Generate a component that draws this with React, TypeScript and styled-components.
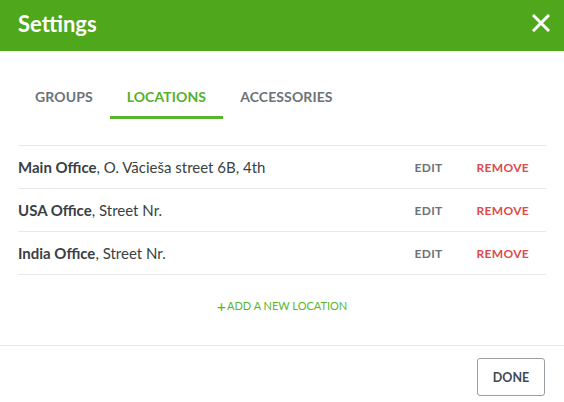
import React from "react";
import styled, { createGlobalStyle } from "styled-components";

const Global = createGlobalStyle`
  html, body { margin: 0; padding: 0; background: #fff; }
  body { font-family: Lato, "Open Sans", sans-serif; }
`;

const Dialog = styled.div`
  width: 564px;
  height: 402px;
  display: flex;
  flex-direction: column;
  background: #fff;
`;

const Header = styled.header`
  height: 51px;
  background: #4fa71b;
  display: flex;
  align-items: center;
  justify-content: space-between;
  padding: 0 11px 0 18px;
  box-sizing: border-box;
`;

const Title = styled.h1`
  margin: 0;
  font-size: 22px;
  font-weight: 700;
  color: #fff;
  line-height: 26px;
  margin-top: -4px;
`;

const CloseButton = styled.button`
  border: 0;
  background: none;
  padding: 0;
  width: 24px;
  height: 24px;
  display: flex;
  align-items: center;
  justify-content: center;
  margin-top: -6px;
  cursor: pointer;
`;

const Body = styled.div`
  flex: 1;
  padding: 0 18px;
  display: flex;
  flex-direction: column;
`;

const Tabs = styled.nav`
  display: flex;
  margin-top: 24px;
  margin-bottom: 26px;
`;

const Tab = styled.div<{ $active?: boolean }>`
  padding: 14px 17px 11px;
  font-size: 14px;
  line-height: 16px;
  font-weight: 700;
  letter-spacing: 0.1px;
  color: ${(p) => (p.$active ? "#55b02a" : "#6b7277")};
  border-bottom: 3px solid ${(p) => (p.$active ? "#5ab52c" : "transparent")};
`;

const List = styled.div`
  border-bottom: 1px solid #e8e8e8;
`;

const Row = styled.div`
  height: 42px;
  border-top: 1px solid #e8e8e8;
  display: flex;
  align-items: center;
`;

const Label = styled.div`
  flex: 1;
  font-size: 15px;
  color: #3a3f44;
`;

const Name = styled.strong`
  font-weight: 700;
`;

const Action = styled.button<{ $danger?: boolean }>`
  border: 0;
  background: none;
  padding: 0 17px;
  font-family: inherit;
  font-size: 12px;
  font-weight: 700;
  letter-spacing: 0.3px;
  color: ${(p) => (p.$danger ? "#e04a4a" : "#6b7277")};
  cursor: pointer;
`;

const AddLink = styled.button`
  align-self: center;
  margin-top: 24px;
  border: 0;
  background: none;
  font-family: inherit;
  font-size: 11px;
  color: #5ab52c;
  display: flex;
  align-items: center;
  gap: 1px;
  padding: 0;
  cursor: pointer;
`;

const Plus = styled.span`
  font-size: 16px;
  line-height: 12px;
`;

const Footer = styled.footer`
  border-top: 1px solid #e8e8e8;
  padding: 12px 19px 6px;
  display: flex;
  justify-content: flex-end;
`;

const DoneButton = styled.button`
  width: 68px;
  height: 38px;
  border: 1px solid #9a9fa3;
  border-radius: 3px;
  background: #fff;
  font-family: inherit;
  font-size: 12.5px;
  font-weight: 700;
  color: #3f4a55;
  cursor: pointer;
`;

const locations = [
  { name: "Main Office", address: "O. Vācieša street 6B, 4th" },
  { name: "USA Office", address: "Street Nr." },
  { name: "India Office", address: "Street Nr." },
];

export default function App() {
  return (
    <>
      <Global />
      <Dialog>
        <Header>
          <Title>Settings</Title>
          <CloseButton aria-label="Close">
            <svg width="18" height="18" viewBox="0 0 18 18">
              <path d="M2 2 L16 16 M16 2 L2 16" stroke="#fff" strokeWidth="3" strokeLinecap="square" />
            </svg>
          </CloseButton>
        </Header>
        <Body>
          <Tabs>
            <Tab>GROUPS</Tab>
            <Tab $active>LOCATIONS</Tab>
            <Tab>ACCESSORIES</Tab>
          </Tabs>
          <List>
            {locations.map((l) => (
              <Row key={l.name}>
                <Label>
                  <Name>{l.name}</Name>, {l.address}
                </Label>
                <Action>EDIT</Action>
                <Action $danger>REMOVE</Action>
              </Row>
            ))}
          </List>
          <AddLink>
            <Plus>+</Plus>ADD A NEW LOCATION
          </AddLink>
        </Body>
        <Footer>
          <DoneButton>DONE</DoneButton>
        </Footer>
      </Dialog>
    </>
  );
}
